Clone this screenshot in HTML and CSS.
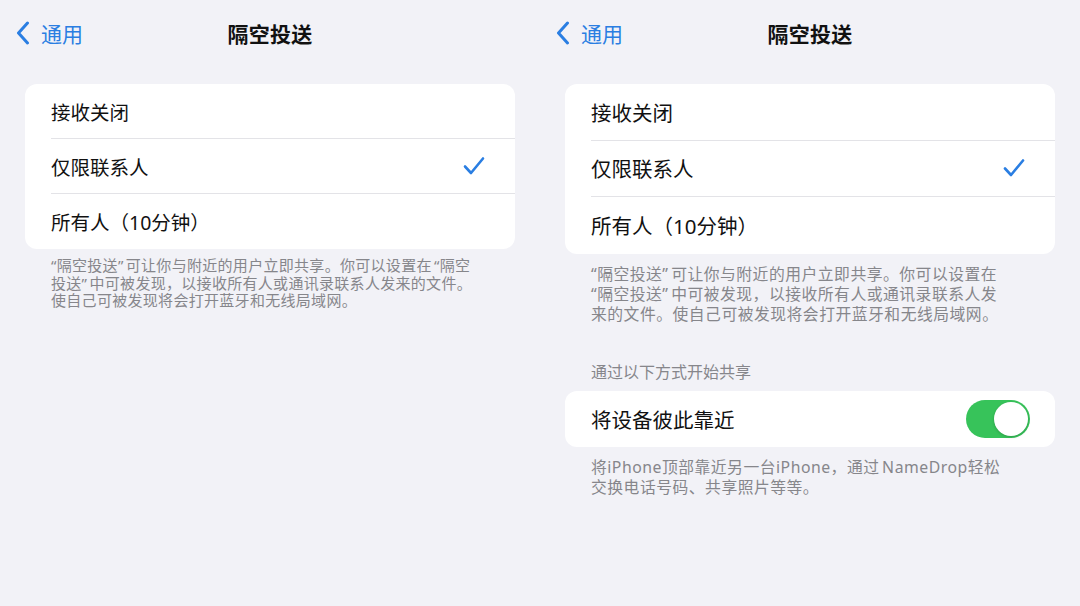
FILE: index.html
```html
<!DOCTYPE html>
<html lang="zh-CN">
<head>
  <meta charset="UTF-8" />
  <meta name="viewport" content="width=device-width, initial-scale=1.0"/>
  <title>隔空投送</title>
  <link rel="stylesheet" href="styles.css">
</head>
<body>

  <div class="screens">

    <!-- left screenshot -->
    <div class="panel">
      <header class="nav">
        <a class="back" href="#">
          <svg class="chevron" width="14" height="24" viewBox="0 0 14 24"><path d="M11.5 2 L2.5 12 L11.5 22" /></svg>
          <span>通用</span>
        </a>
        <h1>隔空投送</h1>
        <span></span>
      </header>

      <div class="card">
        <div class="row">接收关闭</div>
        <div class="row">仅限联系人
          <svg class="check" width="22" height="20" viewBox="0 0 22 20"><path d="M2 10.5 L8 17 L20 2.5" /></svg>
        </div>
        <div class="row">所有人（10分钟）</div>
      </div>
      <p class="note">“隔空投送” 可让你与附近的用户立即共享。你可以设置在 “隔空<br>投送” 中可被发现，以接收所有人或通讯录联系人发来的文件。<br>使自己可被发现将会打开蓝牙和无线局域网。</p>
    </div>

    <!-- right screenshot -->
    <div class="panel large">
      <header class="nav">
        <a class="back" href="#">
          <svg class="chevron" width="14" height="24" viewBox="0 0 14 24"><path d="M11.5 2 L2.5 12 L11.5 22" /></svg>
          <span>通用</span>
        </a>
        <h1>隔空投送</h1>
        <span></span>
      </header>

      <div class="card">
        <div class="row">接收关闭</div>
        <div class="row">仅限联系人
          <svg class="check" width="22" height="20" viewBox="0 0 22 20"><path d="M2 10.5 L8 17 L20 2.5" /></svg>
        </div>
        <div class="row">所有人（10分钟）</div>
      </div>
      <p class="note">“隔空投送” 可让你与附近的用户立即共享。你可以设置在<br>“隔空投送” 中可被发现，以接收所有人或通讯录联系人发<br>来的文件。使自己可被发现将会打开蓝牙和无线局域网。</p>

      <p class="section-title">通过以下方式开始共享</p>
      <div class="card">
        <div class="row toggle-row">将设备彼此靠近
          <span class="switch on"><span class="knob"></span></span>
        </div>
      </div>
      <p class="note">将iPhone顶部靠近另一台iPhone，通过 NameDrop轻松<br>交换电话号码、共享照片等等。</p>
    </div>

  </div>

</body>
</html>
```

FILE: styles.css
```css
body {
  margin: 0;
  background-color: #f2f2f7;
  font-family: "Noto Sans", "Noto Sans CJK SC", sans-serif;
  color: #111;
}
.screens {
  display: flex;
  width: 1080px;
  height: 606px;
}
.panel {
  width: 540px;
  flex: none;
}
.nav {
  display: grid;
  grid-template-columns: 1fr auto 1fr;
  align-items: center;
  height: 66px;
}
.back {
  display: flex;
  align-items: center;
  gap: 11px;
  padding-left: 16px;
  color: #2a7ee2;
  text-decoration: none;
  font-size: 21px;
}
.chevron path {
  fill: none;
  stroke: #2a7ee2;
  stroke-width: 3;
  stroke-linecap: round;
  stroke-linejoin: round;
}
.nav h1 {
  margin: 0;
  font-size: 21px;
  font-weight: 700;
  letter-spacing: 0.3px;
}
.card {
  background: #fff;
  margin: 18px 25px 0;
  border-radius: 12px;
  overflow: hidden;
}
.row {
  display: flex;
  align-items: center;
  justify-content: space-between;
  height: 55px;
  margin-left: 26px;
  padding-right: 30px;
  font-size: 19.5px;
  border-bottom: 1px solid #e3e3e7;
  box-sizing: border-box;
}
.row:last-child {
  border-bottom: none;
}
.check path {
  fill: none;
  stroke: #2a7ee2;
  stroke-width: 2.6;
  stroke-linecap: round;
  stroke-linejoin: round;
}
.note {
  margin: 8px 0 0;
  padding: 0 20px 0 51px;
  font-size: 15px;
  line-height: 17.5px;
  letter-spacing: 0.3px;
  word-spacing: -2px;
  color: #86868b;
  white-space: nowrap;
}
.large .row {
  height: 56.5px;
  font-size: 20.5px;
}
.large .note {
  margin-top: 10px;
  font-size: 15.8px;
  line-height: 20px;
  letter-spacing: 0.5px;
}
.section-title {
  margin: 38px 0 0;
  padding-left: 51px;
  font-size: 16px;
  line-height: 20px;
  color: #86868b;
}
.large .section-title + .card {
  margin-top: 9px;
}
.large .toggle-row {
  height: 56px;
  padding-right: 25px;
}
.switch {
  display: flex;
  align-items: center;
  justify-content: flex-end;
  width: 64px;
  height: 38px;
  padding: 2px;
  box-sizing: border-box;
  border-radius: 19px;
  background: #37c35a;
}
.knob {
  width: 34px;
  height: 34px;
  border-radius: 50%;
  background: #fff;
  box-shadow: 0 1px 3px rgba(0, 0, 0, 0.2);
}
```
